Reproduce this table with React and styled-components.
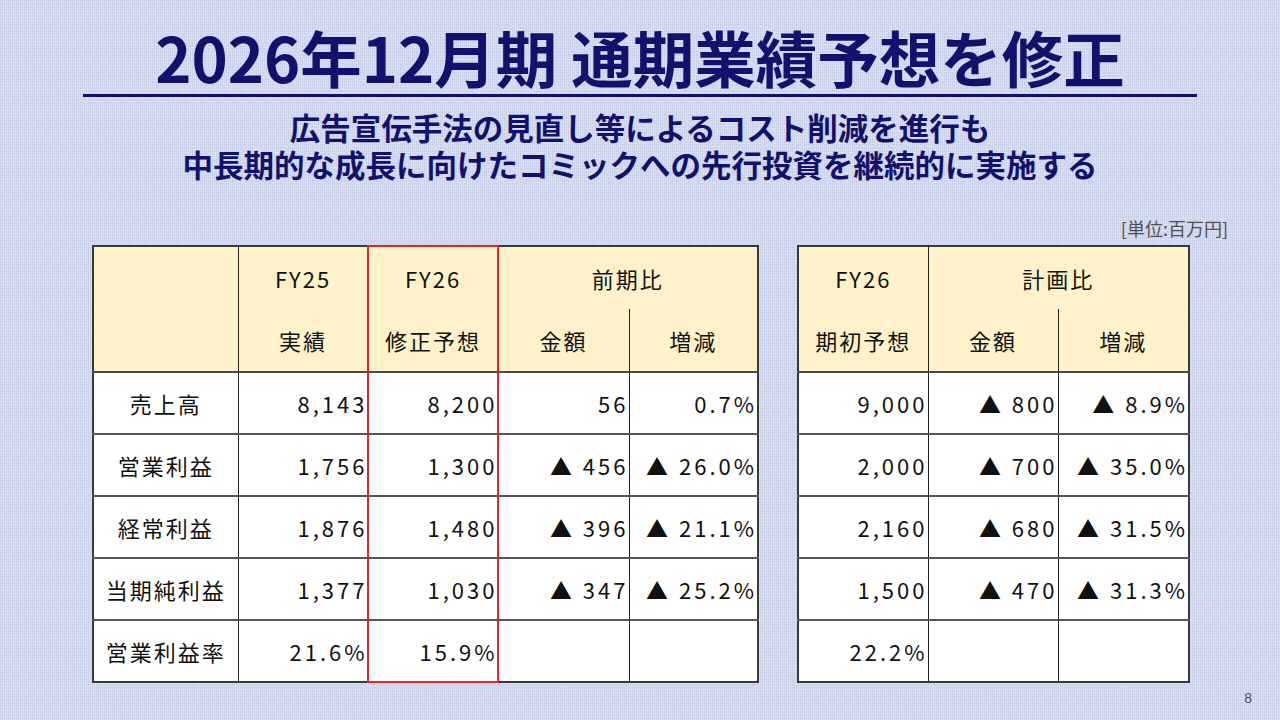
import styled, { createGlobalStyle } from "styled-components";

const GlobalStyle = createGlobalStyle`
  html, body {
    margin: 0;
    padding: 0;
  }
  body {
    font-family: "Noto Sans CJK JP", "Noto Sans", sans-serif;
  }
`;

const navy = "#12126e";
const cream = "#fff1c9";

const Slide = styled.div`
  position: relative;
  width: 1280px;
  height: 720px;
  overflow: hidden;
  box-sizing: border-box;
  background-color: #d3dbee;
  background-image:
    repeating-linear-gradient(0deg, rgba(255, 255, 255, 0.2) 0 1px, transparent 1px 3px),
    repeating-linear-gradient(90deg, rgba(120, 140, 190, 0.14) 0 1px, transparent 1px 2px),
    repeating-linear-gradient(45deg, rgba(255, 255, 255, 0.12) 0 1px, transparent 1px 4px);
  display: flex;
  flex-direction: column;
  align-items: center;
  padding-top: 22px;
`;

const Title = styled.h1`
  margin: 0;
  font-family: "Noto Sans CJK JP", sans-serif;
  font-weight: 700;
  font-size: 61.5px;
  line-height: 70px;
  color: ${navy};
`;

const Rule = styled.div`
  width: 1114px;
  height: 3px;
  margin-top: 2px;
  background: ${navy};
`;

const Lead = styled.div`
  margin-top: 12px;
  display: flex;
  flex-direction: column;
  align-items: center;
  font-weight: 700;
  font-size: 30.5px;
  color: ${navy};
`;

const LeadLine = styled.div`
  height: 37px;
  line-height: 37px;
  white-space: nowrap;
`;

const UnitRow = styled.div`
  align-self: stretch;
  display: flex;
  justify-content: flex-end;
  padding-right: 52px;
  margin-top: 34px;
  font-size: 18px;
  line-height: 22px;
  color: #505050;
`;

const Tables = styled.div`
  align-self: stretch;
  display: flex;
  gap: 38px;
  padding-left: 92px;
  margin-top: 6px;
`;

const TableWrap = styled.div`
  position: relative;
`;

const Grid = styled.table`
  border-collapse: collapse;
  table-layout: fixed;
  font-size: 22px;
  color: #111;
  background: #fff;
  border: 2px solid #3a3a3a;
`;

const Th = styled.th`
  height: 62px;
  padding: 0;
  font-weight: 400;
  background: ${cream};
  letter-spacing: 2px;
  text-align: center;
  vertical-align: middle;
  border-left: 1px solid #222;
  border-right: 1px solid #222;
  border-bottom: ${(p) => (p.$top ? "none" : "2px solid #4a4a4a")};
`;

const Label = styled.td`
  height: 60px;
  padding: 0;
  text-align: center;
  letter-spacing: 2px;
  border: 1px solid #222;
  border-top: 2px solid #555;
`;

const Num = styled.td`
  height: 60px;
  padding: 0;
  text-align: right;
  letter-spacing: 3px;
  white-space: nowrap;
  border: 1px solid #222;
  border-top: 2px solid #555;
`;

const Highlight = styled.div`
  position: absolute;
  top: 0;
  bottom: 0;
  left: ${(p) => p.$left}px;
  width: ${(p) => p.$width}px;
  border: 2px solid #e0262a;
  box-sizing: border-box;
  pointer-events: none;
`;

const PageNo = styled.div`
  position: absolute;
  right: 28px;
  bottom: 14px;
  font-family: "Liberation Sans", Arial, sans-serif;
  font-size: 14px;
  color: #555;
`;

const rows = [
  ["売上高", "8,143", "8,200", "56", "0.7%", "9,000", "▲ 800", "▲ 8.9%"],
  ["営業利益", "1,756", "1,300", "▲ 456", "▲ 26.0%", "2,000", "▲ 700", "▲ 35.0%"],
  ["経常利益", "1,876", "1,480", "▲ 396", "▲ 21.1%", "2,160", "▲ 680", "▲ 31.5%"],
  ["当期純利益", "1,377", "1,030", "▲ 347", "▲ 25.2%", "1,500", "▲ 470", "▲ 31.3%"],
  ["営業利益率", "21.6%", "15.9%", "", "", "22.2%", "", ""],
];

function ResultsTable() {
  return (
    <TableWrap>
      <Grid>
        <colgroup>
          <col style={{ width: 145 }} />
          <col style={{ width: 130 }} />
          <col style={{ width: 130 }} />
          <col style={{ width: 131 }} />
          <col style={{ width: 129 }} />
        </colgroup>
        <thead>
          <tr>
            <Th $top />
            <Th $top>FY25</Th>
            <Th $top>FY26</Th>
            <Th $top colSpan={2}>前期比</Th>
          </tr>
          <tr>
            <Th />
            <Th>実績</Th>
            <Th>修正予想</Th>
            <Th>金額</Th>
            <Th>増減</Th>
          </tr>
        </thead>
        <tbody>
          {rows.map((r) => (
            <tr key={r[0]}>
              <Label>{r[0]}</Label>
              <Num>{r[1]}</Num>
              <Num>{r[2]}</Num>
              <Num>{r[3]}</Num>
              <Num>{r[4]}</Num>
            </tr>
          ))}
        </tbody>
      </Grid>
      <Highlight $left={275} $width={132} />
    </TableWrap>
  );
}

function PlanTable() {
  return (
    <TableWrap>
      <Grid>
        <colgroup>
          <col style={{ width: 130 }} />
          <col style={{ width: 130 }} />
          <col style={{ width: 131 }} />
        </colgroup>
        <thead>
          <tr>
            <Th $top>FY26</Th>
            <Th $top colSpan={2}>計画比</Th>
          </tr>
          <tr>
            <Th>期初予想</Th>
            <Th>金額</Th>
            <Th>増減</Th>
          </tr>
        </thead>
        <tbody>
          {rows.map((r) => (
            <tr key={r[0]}>
              <Num>{r[5]}</Num>
              <Num>{r[6]}</Num>
              <Num>{r[7]}</Num>
            </tr>
          ))}
        </tbody>
      </Grid>
    </TableWrap>
  );
}

export default function App() {
  return (
    <>
      <GlobalStyle />
      <Slide>
        <Title>2026年12月期 通期業績予想を修正</Title>
        <Rule />
        <Lead>
          <LeadLine>広告宣伝手法の見直し等によるコスト削減を進行も</LeadLine>
          <LeadLine>中長期的な成長に向けたコミックへの先行投資を継続的に実施する</LeadLine>
        </Lead>
        <UnitRow>[単位:百万円]</UnitRow>
        <Tables>
          <ResultsTable />
          <PlanTable />
        </Tables>
        <PageNo>8</PageNo>
      </Slide>
    </>
  );
}
